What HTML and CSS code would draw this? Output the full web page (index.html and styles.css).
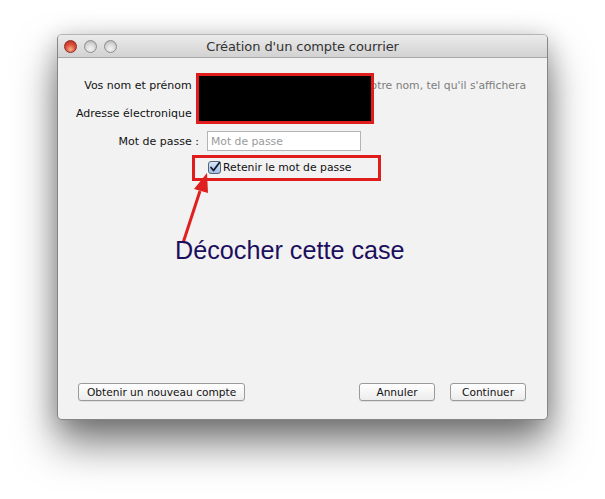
FILE: index.html
```html
<!DOCTYPE html>
<html lang="fr">
<head>
<meta charset="utf-8">
<title>Création d'un compte courrier</title>
<link rel="stylesheet" href="styles.css">
</head>
<body>
<div class="window">
  <div class="titlebar">
    <div class="lights">
      <span class="light red"></span>
      <span class="light"></span>
      <span class="light"></span>
    </div>
    <div class="title">Création d'un compte courrier</div>
  </div>
  <div class="content">
    <div class="form">
      <label class="lbl">Vos nom et prénom :</label>
      <div class="field"><span class="input wide"></span><span class="hint">Votre nom, tel qu'il s'affichera</span></div>
      <label class="lbl">Adresse électronique :</label>
      <div class="field"><span class="input wide"></span></div>
      <label class="lbl">Mot de passe :</label>
      <div class="field"><span class="input pw">Mot de passe</span></div>
      <span></span>
      <div class="check">
        <svg class="box" width="13" height="13" viewBox="0 0 13 13">
          <defs>
            <linearGradient id="cb" x1="0" y1="0" x2="0" y2="1">
              <stop offset="0" stop-color="#dbe8f7"/>
              <stop offset="1" stop-color="#9fbde0"/>
            </linearGradient>
          </defs>
          <rect x="0.5" y="0.5" width="12" height="12" rx="2.5" fill="url(#cb)" stroke="#56627a"/>
          <path d="M3 6.5 L5.5 9.5 L11.5 1.5" fill="none" stroke="#111a33" stroke-width="1.8" stroke-linecap="round" stroke-linejoin="round"/>
        </svg>
        <span>Retenir le mot de passe</span>
      </div>
    </div>
    <div class="spacer"></div>
    <div class="footer">
      <button class="btn">Obtenir un nouveau compte</button>
      <div class="right">
        <button class="btn fixed">Annuler</button>
        <button class="btn fixed">Continuer</button>
      </div>
    </div>
  </div>

  <div class="redact"></div>
  <div class="frame"></div>
  <svg class="arrow" width="60" height="80" viewBox="0 0 60 80">
    <line x1="5" y1="72" x2="22" y2="20" stroke="#e0201e" stroke-width="3"/>
    <polygon points="29,2 16,18 30,22" fill="#e0201e"/>
  </svg>
  <div class="note">Décocher cette case</div>
</div>
</body>
</html>
```

FILE: styles.css
```css
html, body {
  margin: 0;
  padding: 0;
  background: #ffffff;
}
body {
  width: 605px;
  height: 499px;
  overflow: hidden;
  font-family: "DejaVu Sans", "Liberation Sans", sans-serif;
  font-size: 11px;
  color: #111;
}
.window {
  position: relative;
  margin: 34px 0 0 57px;
  width: 491px;
  height: 386px;
  box-sizing: border-box;
  display: flex;
  flex-direction: column;
  background: #f2f2f2;
  border: 1px solid rgba(0,0,0,0.45);
  border-top-color: rgba(0,0,0,0.25);
  border-radius: 5px;
  box-shadow: 0 24px 42px rgba(0,0,0,0.5), 0 4px 24px rgba(0,0,0,0.2);
}
.titlebar {
  position: relative;
  height: 22px;
  flex: none;
  display: flex;
  align-items: center;
  justify-content: center;
  background: linear-gradient(#ebebeb, #d2d2d2);
  border-bottom: 1px solid #a8a8a8;
  border-radius: 4px 4px 0 0;
}
.lights {
  position: absolute;
  left: 6px;
  top: 5px;
  display: flex;
  gap: 7px;
}
.light {
  width: 11px;
  height: 11px;
  border-radius: 50%;
  border: 1px solid #8e8e8e;
  background: radial-gradient(circle at 50% 70%, #f4f4f4 0, #d8d8d8 50%, #a8a8a8 100%);
}
.light.red {
  border-color: #8b2b22;
  background: radial-gradient(circle at 50% 75%, #f5b38a 0, #e0533f 45%, #b3261b 100%);
}
.title {
  font-size: 13px;
  color: #333;
  letter-spacing: -0.1px;
}
.content {
  flex: 1;
  display: flex;
  flex-direction: column;
  padding: 17px 21px 18px 0;
}
.form {
  display: grid;
  grid-template-columns: 141px 1fr;
  column-gap: 8px;
  row-gap: 8px;
  align-items: center;
}
.lbl {
  text-align: right;
  white-space: nowrap;
  font-size: 11px;
}
.field {
  height: 20px;
  display: flex;
  align-items: center;
}
.input {
  box-sizing: border-box;
  height: 20px;
  background: #fff;
  border: 1px solid #b4b4b4;
  display: flex;
  align-items: center;
  padding-left: 3px;
  color: #9a9a9a;
  font-size: 10.8px;
}
.wide { width: 157px; }
.pw { width: 154px; }
.hint {
  margin-left: 0;
  color: #7d7d7d;
  font-size: 10.8px;
  white-space: nowrap;
}
.check {
  height: 16px;
  display: flex;
  align-items: center;
  gap: 2px;
  font-size: 10.8px;
  margin-left: 1px;
}
.spacer { flex: 1; }
.footer {
  display: flex;
  justify-content: space-between;
  padding-left: 20px;
}
.right {
  display: flex;
  gap: 15px;
}
.btn {
  height: 18px;
  box-sizing: border-box;
  padding: 0 8px;
  font-family: inherit;
  font-size: 10.6px;
  color: #111;
  background: linear-gradient(#ffffff, #ececec);
  border: 1px solid #9a9a9a;
  border-radius: 3px;
  box-shadow: 0 1px 0 rgba(0,0,0,0.08);
}
.btn.fixed { width: 76px; }
.redact {
  position: absolute;
  left: 138px;
  top: 38px;
  width: 178px;
  height: 51px;
  box-sizing: border-box;
  background: #000;
  border: 3px solid #e01d1d;
}
.frame {
  position: absolute;
  left: 134px;
  top: 120px;
  width: 189px;
  height: 26px;
  box-sizing: border-box;
  border: 3px solid #e01d1d;
}
.arrow {
  position: absolute;
  left: 120px;
  top: 136px;
}
.note {
  position: absolute;
  left: 117px;
  top: 203px;
  font-family: "Liberation Sans", Arial, sans-serif;
  font-size: 25.2px;
  line-height: 25px;
  color: #1c0f5e;
  white-space: nowrap;
}
```
